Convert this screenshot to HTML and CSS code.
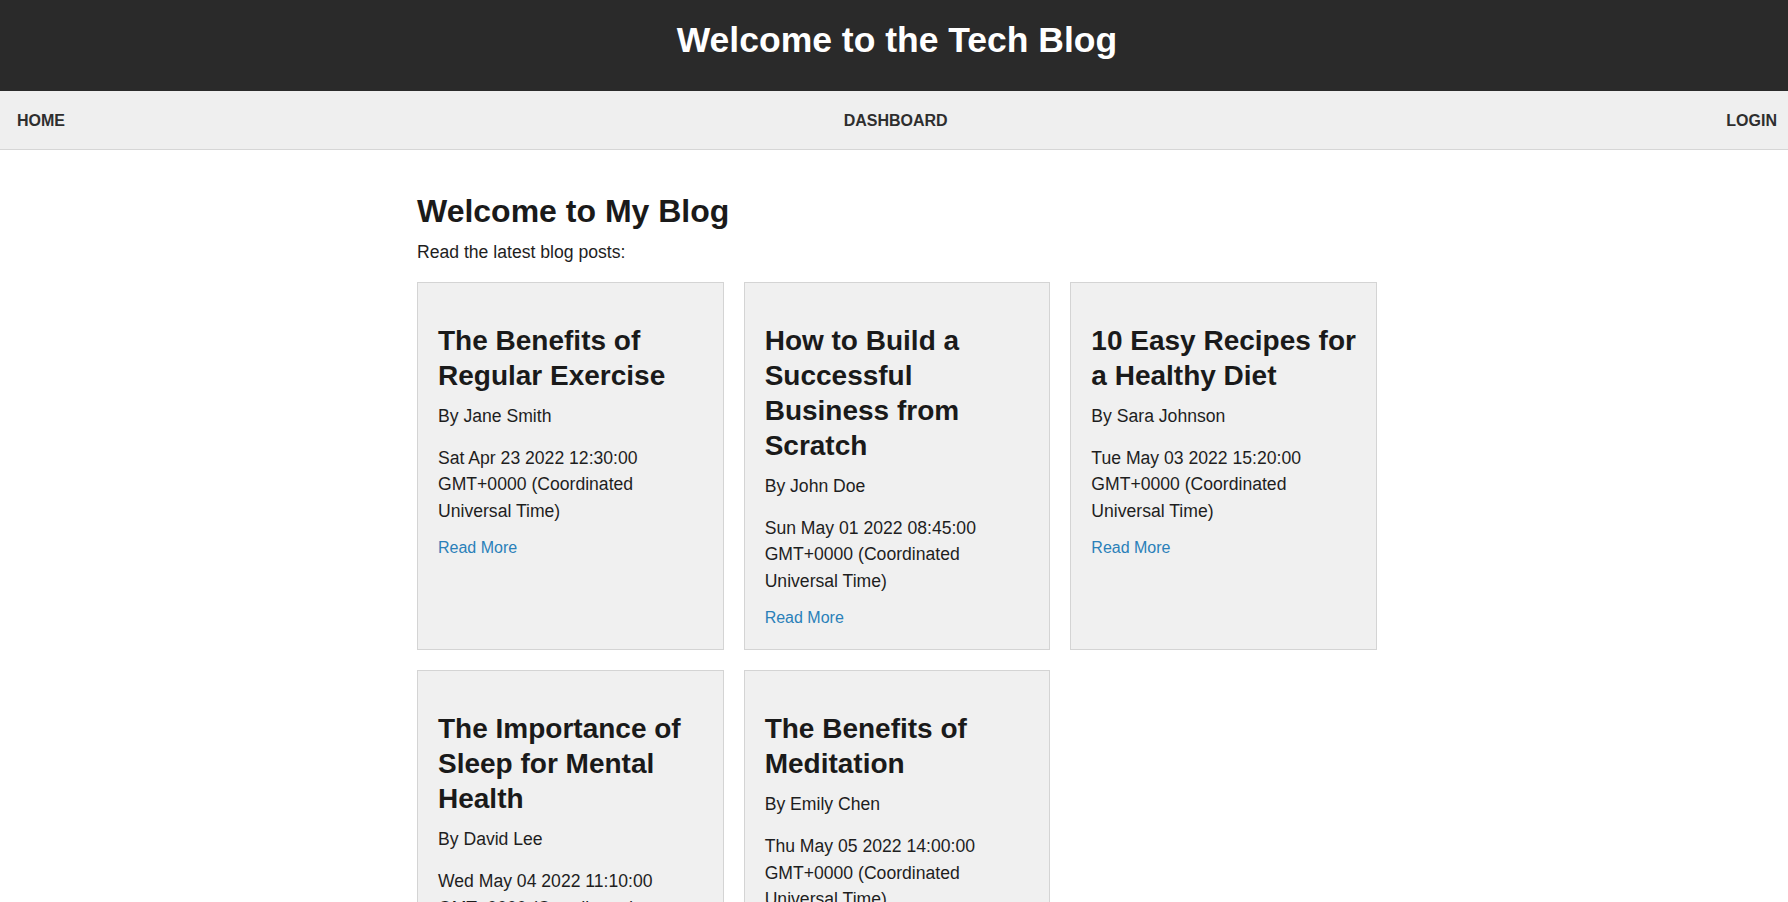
FILE: index.html
```html
<!DOCTYPE html>
<html lang="en">
<head>
<meta charset="utf-8">
<title>Tech Blog</title>
<link rel="stylesheet" href="styles.css">
</head>
<body>
<div class="page">
  <header class="site-header">
    <h1 class="site-title">Welcome to the Tech Blog</h1>
  </header>
  <nav class="site-nav">
    <a class="nav-link" href="#">HOME</a>
    <a class="nav-link" href="#">DASHBOARD</a>
    <a class="nav-link" href="#">LOGIN</a>
  </nav>
  <main class="container">
    <h1 class="page-title">Welcome to My Blog</h1>
    <p class="intro">Read the latest blog posts:</p>
    <div class="post-grid">
      <article class="post-card">
        <h2 class="post-title">The Benefits of Regular Exercise</h2>
        <p class="post-author">By Jane Smith</p>
        <p class="post-date">Sat Apr 23 2022 12:30:00 GMT+0000 (Coordinated Universal Time)</p>
        <div class="post-more"><a class="read-more" href="#">Read More</a></div>
      </article>
      <article class="post-card">
        <h2 class="post-title">How to Build a Successful Business from Scratch</h2>
        <p class="post-author">By John Doe</p>
        <p class="post-date">Sun May 01 2022 08:45:00 GMT+0000 (Coordinated Universal Time)</p>
        <div class="post-more"><a class="read-more" href="#">Read More</a></div>
      </article>
      <article class="post-card">
        <h2 class="post-title">10 Easy Recipes for a Healthy Diet</h2>
        <p class="post-author">By Sara Johnson</p>
        <p class="post-date">Tue May 03 2022 15:20:00 GMT+0000 (Coordinated Universal Time)</p>
        <div class="post-more"><a class="read-more" href="#">Read More</a></div>
      </article>
      <article class="post-card">
        <h2 class="post-title">The Importance of Sleep for Mental Health</h2>
        <p class="post-author">By David Lee</p>
        <p class="post-date">Wed May 04 2022 11:10:00 GMT+0000 (Coordinated Universal Time)</p>
        <div class="post-more"><a class="read-more" href="#">Read More</a></div>
      </article>
      <article class="post-card">
        <h2 class="post-title">The Benefits of Meditation</h2>
        <p class="post-author">By Emily Chen</p>
        <p class="post-date">Thu May 05 2022 14:00:00 GMT+0000 (Coordinated Universal Time)</p>
        <div class="post-more"><a class="read-more" href="#">Read More</a></div>
      </article>
    </div>
  </main>
</div>
</body>
</html>
```
FILE: styles.css
```css
html {
  overflow: hidden;
}

body {
  margin: 0;
  background: #ffffff;
  color: #1e1e1e;
  font-family: "Liberation Sans", Arial, Helvetica, sans-serif;
  font-size: 17.6px;
  line-height: 1.5;
}

.page {
  width: 1794px;
}

.site-header {
  background: #2a2a2a;
  padding: 20px 0 30px;
  text-align: center;
}

.site-title {
  margin: 0;
  color: #ffffff;
  font-size: 35.5px;
  line-height: 41px;
  font-weight: bold;
}

.site-nav {
  display: flex;
  justify-content: space-between;
  align-items: center;
  height: 58px;
  padding: 0 17px;
  background: #efefef;
  border-bottom: 1px solid #d6d6d6;
}

.nav-link {
  color: #2e2e2e;
  text-decoration: none;
  font-size: 16px;
  font-weight: bold;
  line-height: 18px;
  padding-top: 1px;
}

.container {
  max-width: 960px;
  margin: 0 auto;
  padding-top: 43px;
}

.page-title {
  margin: 0 0 8.5px;
  font-size: 32px;
  line-height: 37px;
  font-weight: bold;
  color: #1a1a1a;
}

.intro {
  margin: 0 0 17px;
  line-height: 26.4px;
}

.post-grid {
  display: grid;
  grid-template-columns: repeat(3, 1fr);
  gap: 20px;
}

.post-card {
  background: #f0f0f0;
  border: 1px solid #d4d4d4;
  padding: 20px 20px 19px;
}

.post-title {
  margin: 20px 0 10px;
  font-size: 28px;
  line-height: 35px;
  font-weight: bold;
  color: #1a1a1a;
}

.post-author {
  margin: 0 0 15.5px;
  line-height: 26.4px;
}

.post-date {
  margin: 0 0 12.4px;
  line-height: 26.4px;
}

.post-more {
  font-size: 16px;
  line-height: 24px;
}

.read-more {
  color: #2a80b9;
  text-decoration: none;
}
```
